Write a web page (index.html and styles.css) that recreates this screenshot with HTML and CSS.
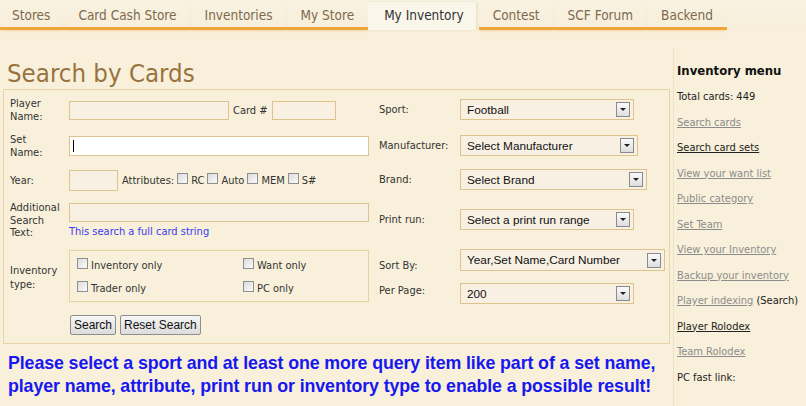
FILE: index.html
```html
<!DOCTYPE html>
<html>
<head>
<meta charset="utf-8">
<link rel="stylesheet" href="styles.css">
</head>
<body>
<div class="nav">
  <a class="tab first">Stores</a>
  <a class="tab">Card Cash Store</a>
  <a class="tab">Inventories</a>
  <a class="tab">My Store</a>
  <a class="tab active">My Inventory</a>
  <a class="tab">Contest</a>
  <a class="tab">SCF Forum</a>
  <a class="tab last">Backend</a>
</div>
<div class="page">
  <main class="main">
    <h1 class="title">Search by Cards</h1>
    <div class="formbox">
      <div class="col left">
        <div class="row r-player">
          <div class="lbl">Player<br>Name:</div>
          <span class="inp w-player"></span>
          <span class="txt cardno">Card #</span>
          <span class="inp w-card"></span>
        </div>
        <div class="row r-set">
          <div class="lbl">Set<br>Name:</div>
          <span class="inp white w-set"><span class="caret"></span></span>
        </div>
        <div class="row r-year">
          <div class="lbl">Year:</div>
          <span class="inp w-year"></span>
          <span class="txt attr">Attributes:</span>
          <span class="cb"></span><span class="txt cbl">RC</span>
          <span class="cb"></span><span class="txt cbl">Auto</span>
          <span class="cb"></span><span class="txt cbl">MEM</span>
          <span class="cb"></span><span class="txt cbl">S#</span>
        </div>
        <div class="row r-add">
          <div class="lbl">Additional<br>Search<br>Text:</div>
          <div class="addfield">
            <span class="inp w-set"></span>
            <span class="hint">This search a full card string</span>
          </div>
        </div>
        <div class="row r-inv">
          <div class="lbl">Inventory<br>type:</div>
          <div class="invbox">
            <div class="invitem"><span class="cb"></span><span class="txt">Inventory only</span></div>
            <div class="invitem"><span class="cb"></span><span class="txt">Want only</span></div>
            <div class="invitem"><span class="cb"></span><span class="txt">Trader only</span></div>
            <div class="invitem"><span class="cb"></span><span class="txt">PC only</span></div>
          </div>
        </div>
        <div class="row r-btn">
          <button class="btn">Search</button>
          <button class="btn">Reset Search</button>
        </div>
      </div>
      <div class="col right">
        <div class="srow s-sport"><div class="slbl">Sport:</div><div class="sel w173"><span>Football</span><i class="arr"></i></div></div>
        <div class="srow s-man"><div class="slbl">Manufacturer:</div><div class="sel w177"><span>Select Manufacturer</span><i class="arr"></i></div></div>
        <div class="srow s-brand"><div class="slbl">Brand:</div><div class="sel w186"><span>Select Brand</span><i class="arr"></i></div></div>
        <div class="srow s-print"><div class="slbl">Print run:</div><div class="sel w173"><span>Select a print run range</span><i class="arr"></i></div></div>
        <div class="srow s-sort"><div class="slbl low">Sort By:</div><div class="sel w204"><span>Year,Set Name,Card Number</span><i class="arr"></i></div></div>
        <div class="srow s-page"><div class="slbl high">Per Page:</div><div class="sel w173"><span>200</span><i class="arr"></i></div></div>
      </div>
    </div>
    <p class="msg">Please select a sport and at least one more query item like part of a set name, player name, attribute, print run or inventory type to enable a possible result!</p>
  </main>
  <aside class="side">
    <div class="sitem head">Inventory menu</div>
    <div class="sitem">Total cards: 449</div>
    <div class="sitem"><a class="lnk">Search cards</a></div>
    <div class="sitem"><a class="lnk dark">Search card sets</a></div>
    <div class="sitem"><a class="lnk">View your want list</a></div>
    <div class="sitem"><a class="lnk">Public category</a></div>
    <div class="sitem"><a class="lnk">Set Team</a></div>
    <div class="sitem"><a class="lnk">View your Inventory</a></div>
    <div class="sitem"><a class="lnk">Backup your inventory</a></div>
    <div class="sitem"><a class="lnk">Player indexing</a> (Search)</div>
    <div class="sitem"><a class="lnk dark">Player Rolodex</a></div>
    <div class="sitem"><a class="lnk">Team Rolodex</a></div>
    <div class="sitem">PC fast link:</div>
  </aside>
</div>
</body>
</html>
```
FILE: styles.css
```css
html, body {
  margin: 0;
  padding: 0;
}
body {
  width: 806px;
  height: 406px;
  overflow: hidden;
  background: #f8f0da;
  font-family: "DejaVu Sans Condensed", "DejaVu Sans", sans-serif;
  font-size: 11px;
  color: #333;
}

/* nav */
.nav {
  display: flex;
  height: 30px;
  background: linear-gradient(#f8f2e2, #f7efd9);
  align-items: flex-start;
}
.tab {
  display: block;
  box-sizing: border-box;
  height: 30px;
  padding: 7px 14px 0;
  font-size: 13.5px;
  color: #7d6a4e;
  border-bottom: 3px solid #f0a53a;
  box-shadow: 0 2px 2px -1px rgba(240, 165, 58, 0.35);
  white-space: nowrap;
}
.tab.first { padding-left: 12px; }
.tab.last { padding-right: 14px; }
.tab.active {
  margin: 2px 3px 0 0;
  padding: 5px 12px 0 16px;
  height: 28px;
  color: #333;
  background: #faf6ea;
  border-bottom: none;
  box-shadow: 1px 0 2px rgba(200, 180, 140, 0.35);
}

/* page */
.page {
  display: flex;
  height: 376px;
}
.main {
  width: 673px;
  flex: none;
}
.side {
  flex: 1;
  border-left: 1px solid #ece2c8;
  margin-top: 18px;
  padding: 14px 0 0 3px;
}

.title {
  margin: 0;
  padding: 28px 0 0 7px;
  height: 31px;
  font-weight: normal;
  font-size: 25.6px;
  line-height: 30px;
  color: #98733f;
}

.formbox {
  margin: 0 3px 0 3px;
  box-sizing: border-box;
  height: 255px;
  border: 1px solid #e8d5a6;
  display: flex;
}
.col.left {
  width: 375px;
  padding: 7px 0 0 6px;
  box-sizing: border-box;
}
.col.right {
  flex: 1;
  padding: 9px 0 0 0;
}

.row {
  display: flex;
  align-items: center;
}
.lbl {
  width: 59px;
  flex: none;
  line-height: 13px;
  color: #333;
}
.inp {
  display: block;
  box-sizing: border-box;
  height: 19px;
  border: 1px solid #dec48c;
  background: #f7f0e3;
  flex: none;
}
.inp.white { background: #fff; height: 20px; position: relative; }
.caret {
  position: absolute;
  left: 3px;
  top: 3px;
  width: 1px;
  height: 12px;
  background: #000;
}
.w-player { width: 160px; }
.w-card { width: 64px; }
.w-set { width: 300px; }
.w-year { width: 49px; height: 21px; }
.txt { white-space: nowrap; }
.cardno { margin: 0 4px 0 4px; }
.attr { margin: 0 3px 0 4px; }
.cb {
  display: inline-block;
  box-sizing: border-box;
  width: 11px;
  height: 11px;
  border: 1px solid #8e8e8e;
  background: linear-gradient(135deg, #dcdcdc, #fafafa);
  flex: none;
  margin-top: -3px;
}
.cbl { margin: 0 3px 0 3px; }

.r-player { height: 26px; margin-top: 0; }
.r-set { height: 24px; margin-top: 11px; }
.r-year { height: 22px; margin-top: 11px; }
.r-add { height: 39px; margin-top: 12px; align-items: flex-start; }
.r-add .lbl { margin-top: -1px; line-height: 12.6px; }
.addfield { display: flex; flex-direction: column; }
.addfield .inp { margin-top: 0; }
.hint {
  color: #3a3af2;
  margin-top: 3px;
  line-height: 13px;
}
.r-inv { height: 52px; margin-top: 8px; align-items: flex-start; }
.r-inv .lbl { margin-top: 14px; line-height: 13.5px; }
.invbox {
  box-sizing: border-box;
  width: 300px;
  height: 52px;
  border: 1px solid #e5d1a2;
  display: grid;
  grid-template-columns: 166px 1fr;
  grid-template-rows: 23px 23px;
  padding: 3px 0 0 7px;
}
.invitem {
  display: flex;
  align-items: center;
}
.invitem .cb { margin: 0 3px 0 0; margin-top: -4px; }
.r-btn { margin-top: 13px; padding-left: 60px; gap: 4px; }
.btn {
  font-family: "Liberation Sans", Arial, sans-serif;
  font-size: 12px;
  color: #111;
  height: 20px;
  padding: 0 3px;
  border: 1px solid #8f8f8f;
  border-radius: 2px;
  background: linear-gradient(#f6f6f6, #dcdcdc);
  line-height: 17px;
}

.srow {
  display: flex;
  align-items: center;
}
.slbl {
  width: 81px;
  flex: none;
}
.slbl.low { align-self: flex-end; margin-bottom: -1px; }
.slbl.high { align-self: flex-start; margin-top: 1px; }
.sel {
  box-sizing: border-box;
  height: 21px;
  border: 1px solid #dec48c;
  background: #f7f0e3;
  display: flex;
  align-items: center;
  justify-content: space-between;
  padding: 0 3px 0 6px;
  font-family: "Liberation Sans", Arial, sans-serif;
  font-size: 11.8px;
  color: #111;
}
.arr {
  display: block;
  box-sizing: border-box;
  width: 14px;
  height: 15px;
  border: 1px solid #8a8a8a;
  background: linear-gradient(#fafafa, #dedede);
  position: relative;
}
.arr::after {
  content: "";
  position: absolute;
  left: 3px;
  top: 5px;
  border-left: 3px solid transparent;
  border-right: 3px solid transparent;
  border-top: 3px solid #222;
}
.w173 { width: 174px; }
.w177 { width: 178px; }
.w186 { width: 187px; }
.w204 { width: 205px; }

.s-sport { margin-top: 0; }
.s-man { margin-top: 15px; }
.s-brand { margin-top: 13px; }
.s-print { margin-top: 19px; }
.s-sort { margin-top: 19px; height: 22px; }
.s-sort .sel { height: 22px; }
.s-page { margin-top: 12px; }

.msg {
  margin: 8px 0 0 8px;
  font-family: "Liberation Sans", Arial, sans-serif;
  font-weight: bold;
  font-size: 17.8px;
  line-height: 23px;
  letter-spacing: -0.1px;
  color: #1717f0;
}

.sitem {
  height: 25.5px;
  line-height: 18px;
  white-space: nowrap;
  color: #222;
}
.sitem.head {
  font-weight: bold;
  font-size: 13px;
  height: 26px;
  color: #111;
}
.lnk {
  color: #8c8c8c;
  text-decoration: underline;
}
.lnk.dark { color: #222; }
```
